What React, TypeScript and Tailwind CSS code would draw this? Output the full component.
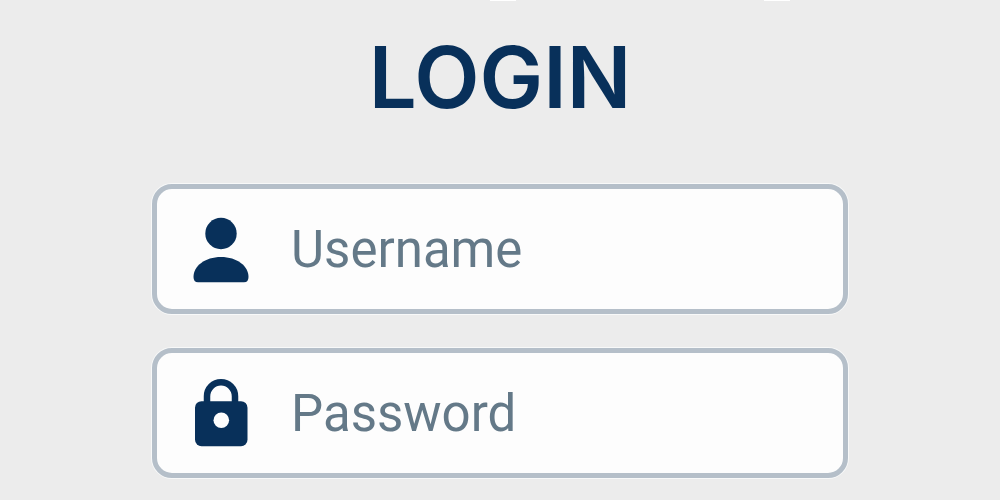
import type { ReactNode } from "react";

function UserIcon() {
  return (
    <svg viewBox="0 0 56 68" className="h-[68px] w-14 shrink-0 fill-[#08305a]" aria-hidden="true">
      <circle cx="28" cy="18.5" r="15.7" />
      <path d="M0.5 62C0.5 51 12 42 28 42S55.5 51 55.5 62Q55.5 67.3 51 67.3H5Q0.5 67.3 0.5 62Z" />
    </svg>
  );
}

function LockIcon() {
  return (
    <svg viewBox="0 0 56 68" className="h-[68px] w-14 shrink-0" aria-hidden="true">
      <path d="M14 25V17.3a14 14 0 0 1 28 0V25" fill="none" stroke="#08305a" strokeWidth="6.5" />
      <rect x="2" y="22.2" width="52.5" height="45" rx="6.5" fill="#08305a" />
      <circle cx="28.3" cy="41.3" r="7.8" fill="#fefefe" />
    </svg>
  );
}

type FieldProps = {
  id: string;
  label: string;
  type: string;
  autoComplete: string;
  icon: ReactNode;
};

function Field({ id, label, type, autoComplete, icon }: FieldProps) {
  return (
    <label
      htmlFor={id}
      className="flex items-center gap-[42px] rounded-[20px] border-[5px] border-[#b5bfc9] bg-[#fdfdfd] px-9 py-[26px] shadow-[0_0_0_1px_#f8f9f9]"
    >
      {icon}
      <input
        id={id}
        name={id}
        type={type}
        aria-label={label}
        autoComplete={autoComplete}
        placeholder={label}
        className="h-[68px] w-full min-w-0 bg-transparent pt-[2px] font-['Roboto',sans-serif] text-[51px] text-[#08305a] outline-none placeholder:text-[#647988]"
      />
    </label>
  );
}

export default function App() {
  return (
    <main className="min-h-screen bg-[#ececec] px-6 font-['Inter',sans-serif]">
      <div className="mx-auto flex max-w-[696px] flex-col">
        <div className="flex h-px justify-end gap-[248px] pr-[58px]" aria-hidden="true">
          <span className="w-[26px] bg-white" />
          <span className="w-[26px] bg-white" />
        </div>
        <h1 className="mt-[33px] text-center text-[85px] leading-[88px] font-semibold text-[#08305a]">LOGIN</h1>
        <form className="mt-[62px] flex flex-col gap-[34px] pb-5">
          <Field id="username" label="Username" type="text" autoComplete="username" icon={<UserIcon />} />
          <Field id="password" label="Password" type="password" autoComplete="current-password" icon={<LockIcon />} />
        </form>
      </div>
    </main>
  );
}
